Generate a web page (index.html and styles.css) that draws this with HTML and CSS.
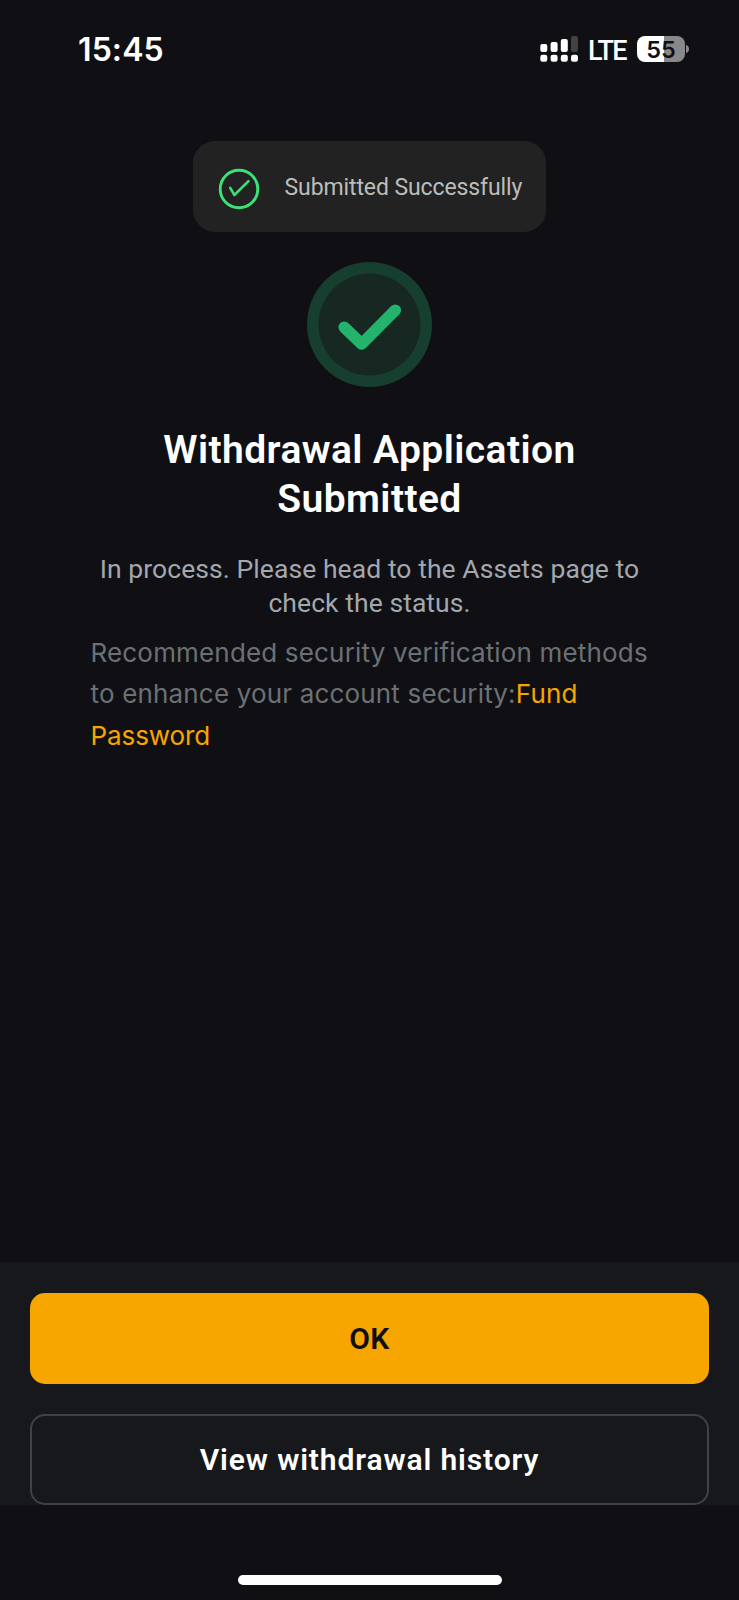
FILE: index.html
```
<!DOCTYPE html>
<html lang="en">
<head>
<meta charset="utf-8">
<title>Withdrawal Application Submitted</title>
<link rel="stylesheet" href="styles.css">
</head>
<body>
<div class="screen">
  <header class="status-bar">
    <span class="time">15:45</span>
    <div class="status-right">
      <svg class="signal" width="38" height="26" viewBox="0 0 38 26" fill="#fff">
        <rect x="0.3" y="8" width="7" height="8" rx="2"/>
        <rect x="10.6" y="6" width="7" height="10" rx="2"/>
        <rect x="20.8" y="3" width="7" height="13" rx="2"/>
        <rect x="31" y="0" width="7" height="16" rx="2" fill="#424246"/>
        <rect x="0.3" y="18.8" width="7" height="7" rx="2.2"/>
        <rect x="10.6" y="18.8" width="7" height="7" rx="2.2"/>
        <rect x="20.8" y="18.8" width="7" height="7" rx="2.2"/>
        <rect x="31" y="18.8" width="7" height="7" rx="2.2"/>
      </svg>
      <span class="network">LTE</span>
      <div class="battery">
        <span class="battery-body">55</span>
        <svg class="battery-nub" width="4" height="8" viewBox="0 0 4 8"><path d="M0 0C2 .6 3 2 3 4S2 7.4 0 8Z" fill="#88888a"/></svg>
      </div>
    </div>
  </header>

  <div class="toast">
    <svg width="42" height="42" viewBox="0 0 42 42" fill="none" stroke="#3be377">
      <circle cx="21" cy="21" r="18.8" stroke-width="2.9"/>
      <path d="M12.2 19.8L16.4 27L30.5 13.2" stroke-width="2.5" stroke-linecap="round" stroke-linejoin="round"/>
    </svg>
    <span class="toast-text">Submitted Successfully</span>
  </div>

  <main class="result">
    <svg class="result-icon" width="125" height="125" viewBox="0 0 125 125" fill="none">
      <circle cx="62.5" cy="62.5" r="62.5" fill="#173f2f"/>
      <circle cx="62.5" cy="62.5" r="51" fill="#162821"/>
      <path d="M37.2 65.2L54.7 82L88.3 48.2" stroke="#22b36d" stroke-width="11.6" stroke-linecap="round" stroke-linejoin="round"/>
    </svg>
    <h1 class="title">Withdrawal Application<br>Submitted</h1>
    <p class="message">In process. Please head to the Assets page to<br>check the status.</p>
    <p class="advice">Recommended security verification methods<br>to enhance your account security:<a class="link">Fund<br><span class="link-end">Password</span></a></p>
  </main>

  <footer class="actions">
    <button class="btn btn-primary">OK</button>
    <button class="btn btn-outline">View withdrawal history</button>
  </footer>
  <div class="home-area"><div class="home-indicator"></div></div>
</div>
</body>
</html>
```
FILE: styles.css
```
* { box-sizing: border-box; }

body {
  margin: 0;
  background: #101014;
  color: #fff;
  font-family: Roboto, sans-serif;
}

.screen {
  display: flex;
  flex-direction: column;
  align-items: center;
  width: 739px;
  height: 1600px;
  overflow: hidden;
}

.status-bar {
  display: flex;
  justify-content: space-between;
  align-items: center;
  width: 100%;
  height: 98px;
  padding: 0 49px 0 78px;
  flex: none;
}

.time {
  margin-top: 2px;
  font: 600 32px/38px Inter, sans-serif;
  letter-spacing: 0.1px;
}

.status-right {
  display: flex;
  align-items: center;
}

.network {
  width: 38px;
  margin: 3px 11px 0 10px;
  font-size: 27px;
  font-weight: 500;
  line-height: 32px;
  letter-spacing: -1.7px;
  white-space: nowrap;
}

.battery {
  display: flex;
  align-items: center;
  gap: 1px;
}

.battery-body {
  width: 48px;
  height: 26px;
  border-radius: 8px;
  background: linear-gradient(90deg, #fff 55.5%, #88888a 55.5%);
  color: #101014;
  font: 600 23.5px/27px Inter, sans-serif;
  text-align: center;
}

.toast {
  display: flex;
  align-items: center;
  width: 353px;
  height: 91px;
  margin: 43px 0 0 0;
  padding-left: 25px;
  border-radius: 22px;
  background: #222222;
  flex: none;
}

.toast svg {
  margin-top: 4px;
}

.toast-text {
  margin: 2px 0 0 24.5px;
  font-size: 23px;
  font-weight: 400;
  letter-spacing: -0.1px;
  color: #bcbcbc;
  white-space: nowrap;
}

.result {
  width: 556px;
  padding-top: 30px;
  flex: 1;
}

.result-icon {
  display: block;
  margin: 0 auto;
}

.title {
  margin: 39px 0 0;
  font-size: 39px;
  font-weight: 600;
  line-height: 49px;
  letter-spacing: 0.42px;
  text-align: center;
}

.message {
  margin: 27.5px 0 0;
  font-size: 26.5px;
  line-height: 34px;
  letter-spacing: 0.07px;
  text-align: center;
  color: #a3a7ae;
  white-space: nowrap;
}

.advice {
  margin: 12px -10px 0 -1px;
  font: 400 26px/41.8px Inter, sans-serif;
  letter-spacing: 0.17px;
  color: #6c7075;
  white-space: nowrap;
}

.link {
  color: #f7a600;
}

.link-end {
  letter-spacing: -0.1px;
}

.actions {
  display: flex;
  flex-direction: column;
  gap: 30px;
  width: 100%;
  height: 243px;
  padding: 31px 30px 0;
  background: #16181b;
  flex: none;
}

.btn {
  height: 91px;
  padding: 0;
  border: 0;
  border-radius: 15px;
  font: 600 30px/36px Roboto, sans-serif;
  flex: none;
}

.btn-primary {
  background: #f7a600;
  color: #101014;
  letter-spacing: 0.4px;
}

.btn-outline {
  border: 2px solid #404145;
  background: #16181b;
  color: #fff;
  letter-spacing: 0.89px;
}

.home-area {
  display: flex;
  justify-content: center;
  width: 100%;
  height: 95px;
  padding-top: 70px;
  flex: none;
}

.home-indicator {
  width: 264px;
  height: 10px;
  border-radius: 5px;
  background: #fff;
}
```
